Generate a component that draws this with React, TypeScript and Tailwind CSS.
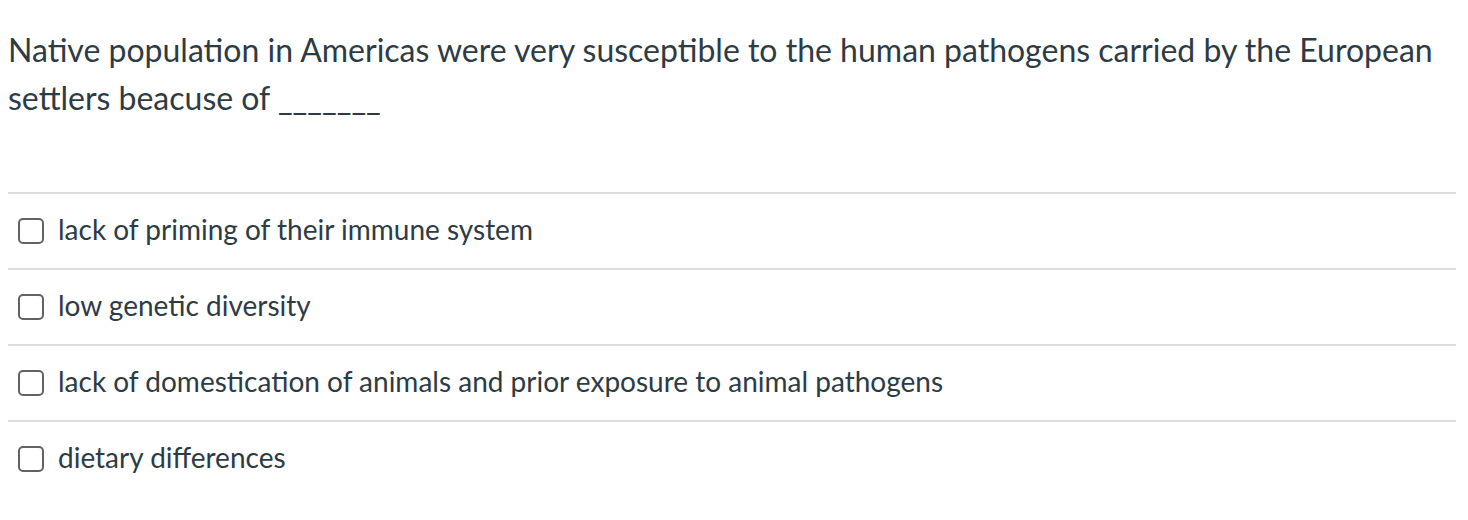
const answers = [
  "lack of priming of their immune system",
  "low genetic diversity",
  "lack of domestication of animals and prior exposure to animal pathogens",
  "dietary differences",
];

export default function App() {
  return (
    <div className="min-h-[520px] w-[1468px] bg-white px-2 font-['Lato',_'Noto_Sans',_sans-serif] text-[#2d3b45]">
      {/* Question */}
      <div className="pt-[26px] pb-[70px] text-[32px] leading-[48px]">
        Native population in Americas were very susceptible to the human pathogens carried by the European settlers beacuse of _______
      </div>

      {/* Answers */}
      <div className="w-[1448px]">
        {answers.map((a) => (
          <label
            key={a}
            className="flex h-[76px] items-center gap-[14px] border-t-2 border-[#dcdcdc] pl-[10px] text-[28px]"
          >
            <span className="h-[26px] w-[26px] flex-shrink-0 rounded-[5px] border-2 border-[#626262] bg-white" />
            <span className="mb-[5px]">{a}</span>
          </label>
        ))}
      </div>
    </div>
  );
}
